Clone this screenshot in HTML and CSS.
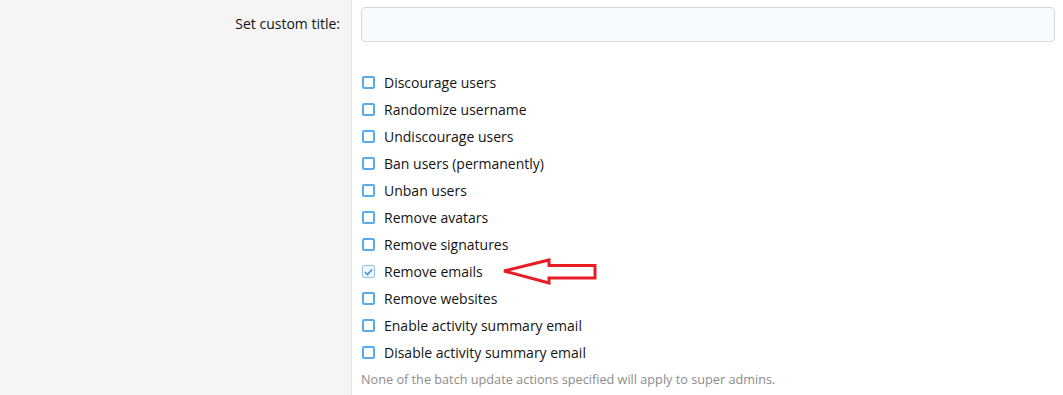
FILE: index.html
```html
<!DOCTYPE html>
<html lang="en">
<head>
    <meta charset="UTF-8">
    <meta name="viewport" content="width=device-width, initial-scale=1.0">
    <title>Batch update users</title>
    <link rel="stylesheet" href="styles.css">
</head>
<body>
    <div class="form-row">
        <div class="form-label">
            <label for="custom-title">Set custom title:</label>
        </div>
        <div class="form-input">
            <input type="text" id="custom-title" class="text-box">

            <ul class="action-list">
                <li><label><span class="check"></span>Discourage users</label></li>
                <li><label><span class="check"></span>Randomize username</label></li>
                <li><label><span class="check"></span>Undiscourage users</label></li>
                <li><label><span class="check"></span>Ban users (permanently)</label></li>
                <li><label><span class="check"></span>Unban users</label></li>
                <li><label><span class="check"></span>Remove avatars</label></li>
                <li><label><span class="check"></span>Remove signatures</label></li>
                <li class="marked">
                    <label><span class="check checked">
                        <svg width="9" height="8" viewBox="0 0 9 8"><path d="M1 4 L3.5 6.5 L8 1.5" fill="none" stroke="#3d92dc" stroke-width="1.6"/></svg>
                    </span>Remove emails</label>
                    <!-- annotation arrow -->
                    <svg class="arrow" width="100" height="28" viewBox="0 0 100 28">
                        <path d="M3 13 L48 2 L48 7.5 L94 7.5 L94 20 L48 20 L48 25 Z" fill="none" stroke="#e81c24" stroke-width="3" stroke-linejoin="miter"/>
                    </svg>
                </li>
                <li><label><span class="check"></span>Remove websites</label></li>
                <li><label><span class="check"></span>Enable activity summary email</label></li>
                <li><label><span class="check"></span>Disable activity summary email</label></li>
            </ul>
            <p class="hint">None of the batch update actions specified will apply to super admins.</p>
        </div>
    </div>
</body>
</html>
```

FILE: styles.css
```css
body {
    margin: 0;
    font-family: "Segoe UI", "Open Sans", "Noto Sans", sans-serif;
    font-size: 14px;
    color: #141414;
    background: #fff;
}

.form-row {
    display: flex;
    min-height: 395px;
}

.form-label {
    width: 352px;
    flex-shrink: 0;
    background-color: #f5f5f5;
    border-right: 1px solid #e4e4e4;
    box-sizing: border-box;
    text-align: right;
    padding: 14px 11px 0 0;
}

.form-input {
    flex: 1;
    padding: 7px 8px 0 9px;
}

.text-box {
    display: block;
    width: 100%;
    height: 35px;
    box-sizing: border-box;
    background-color: #f8fbfe;
    border: 1px solid #d8d8d8;
    border-radius: 4px;
    margin: 0;
}

.action-list {
    list-style: none;
    margin: 27px 0 0 0;
    padding: 0;
}

.action-list li {
    position: relative;
    height: 27px;
    display: flex;
    align-items: center;
}

.action-list label {
    display: flex;
    align-items: center;
}

.check {
    width: 13px;
    height: 13px;
    box-sizing: border-box;
    border: 2px solid #5aabeb;
    border-radius: 2px;
    margin: 0 9px 0 1px;
    display: flex;
    align-items: center;
    justify-content: center;
}

.check.checked {
    border: 1.5px solid #8fc3ee;
    background-color: #eef5fc;
}

.arrow {
    position: absolute;
    left: 140px;
    top: 0;
}

.hint {
    margin: 4px 0 0 0;
    font-size: 12.7px;
    color: #8c8c8c;
}
```
